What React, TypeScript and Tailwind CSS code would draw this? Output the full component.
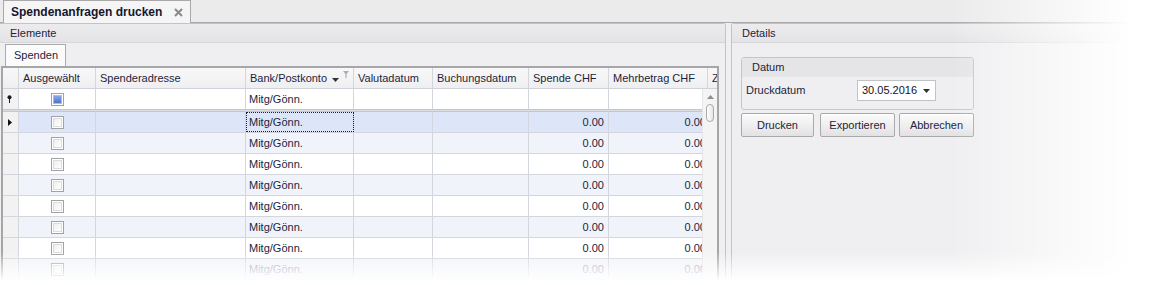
import React from "react";

const COLS = [77, 150, 108, 79, 96, 80, 99, 60];
const HEAD = ["Ausgewählt", "Spenderadresse", "Bank/Postkonto", "Valutadatum", "Buchungsdatum", "Spende CHF", "Mehrbetrag CHF", "Z"];

function Check({ blue }: { blue?: boolean }) {
  return (
    <div className="w-[13px] h-[13px] border border-[#a2a2a2] bg-white p-px">
      {blue ? (
        <div className="w-full h-full border border-[#a9bde8] bg-linear-to-b from-[#8aa6e6] to-[#4e72c6]" />
      ) : (
        <div className="w-full h-full border border-[#dcdcdc] bg-linear-to-br from-[#efefef] to-white" />
      )}
    </div>
  );
}

function Indicator({ kind, bg }: { kind?: "pin" | "arrow"; bg: string }) {
  return (
    <div className={`w-[16px] shrink-0 h-full border-r border-[#d3d6dc] flex items-center justify-center ${bg}`}>
      {kind === "pin" && (
        <svg width="5" height="8" viewBox="0 0 5 8" className="mr-[2px]">
          <circle cx="2.5" cy="2.2" r="2" fill="#1a1a1a" />
          <rect x="2" y="3.5" width="1" height="4.5" fill="#1a1a1a" />
        </svg>
      )}
      {kind === "arrow" && (
        <svg width="4" height="7" viewBox="0 0 4 7" className="mr-[1px]">
          <polygon points="0,0 4,3.5 0,7" fill="#111" />
        </svg>
      )}
    </div>
  );
}

function DataRow({ i, faded }: { i: number; faded?: boolean }) {
  const selected = i === 0;
  const bg = selected ? "bg-[#dde6f8]" : i % 2 === 1 ? "bg-[#f0f3f9]" : "bg-white";
  const txt = faded ? "text-[#9a9ab0]" : "text-[#1e1e3c]";
  return (
    <div className={`flex h-[21px] border-b border-[#d3d6dc] ${txt}`}>
      <Indicator kind={selected ? "arrow" : undefined} bg="bg-[#f2f2f3]" />
      <div className={`flex ${bg}`}>
        <div className="w-[77px] shrink-0 border-r border-[#d3d6dc] flex items-center justify-center">
          <Check />
        </div>
        <div className="w-[150px] shrink-0 border-r border-[#d3d6dc]" />
        <div
          className={`w-[108px] shrink-0 border-r border-[#d3d6dc] flex items-center pl-[3px] ${
            selected ? "outline outline-1 outline-dotted outline-[#222] -outline-offset-1" : ""
          }`}
        >
          Mitg/Gönn.
        </div>
        <div className="w-[79px] shrink-0 border-r border-[#d3d6dc]" />
        <div className="w-[96px] shrink-0 border-r border-[#d3d6dc]" />
        <div className="w-[80px] shrink-0 border-r border-[#d3d6dc] flex items-center justify-end pr-[4px]">0.00</div>
        <div className="w-[99px] shrink-0 border-r border-[#d3d6dc] flex items-center justify-end pr-[1px]">0.00</div>
        <div className="w-[60px] shrink-0" />
      </div>
    </div>
  );
}

function Btn({ label, w, ml }: { label: string; w: string; ml: string }) {
  return (
    <div
      className={`${w} ${ml} h-[24px] border border-[#a9a9a9] rounded-[2px] bg-linear-to-b from-[#fbfbfb] via-[#efeff0] to-[#e2e2e4] flex items-center justify-center text-[#1e1e3c] shadow-[inset_0_1px_0_#ffffff]`}
    >
      {label}
    </div>
  );
}

export default function App() {
  return (
    <div className="relative w-[1157px] h-[285px] overflow-hidden bg-[#efeff1] font-['Liberation_Sans',Arial,sans-serif] text-[11px] text-[#1e1e3c] leading-none">
      {/* document tab strip */}
      <div className="h-[23px] bg-[#ebebec] border-b border-[#a9a9a9] flex items-end pl-[3px]">
        <div className="relative -mb-px h-[23px] w-[188px] bg-[#f5f5f6] border border-b-0 border-[#a9a9a9] flex items-center pl-[7px] text-[12px] font-bold text-[#16162c]">
          Spendenanfragen drucken
          <svg className="absolute left-[170px] top-[7px]" width="9" height="9" viewBox="0 0 9 9">
            <path d="M1 1 L8 8 M8 1 L1 8" stroke="#8a8a8e" strokeWidth="2" />
          </svg>
        </div>
      </div>

      <div className="flex h-[262px]">
        {/* Elemente panel */}
        <div className="w-[726px] shrink-0 border-t border-r border-[#c3c3c6] rounded-tr-[3px] flex flex-col">
          <div className="h-[19px] shrink-0 bg-linear-to-b from-[#ececee] to-[#e4e4e6] border-b border-[#d6d6d9] flex items-center pl-[10px]">
            Elemente
          </div>
          <div className="pt-[1px] pl-[5px] flex h-[23px] shrink-0">
            <div className="w-[61px] h-[22px] bg-[#fbfbfb] border border-b-0 border-[#ababae] flex items-center pl-[8px] text-[#1e1e3c]">
              Spenden
            </div>
          </div>
          {/* grid */}
          <div className="ml-[1px] w-[718px] flex-1 border-x-2 border-t-2 border-[#a6a6a8] overflow-hidden bg-white">
            {/* header */}
            <div className="flex h-[21px] border-b border-[#cfd2d8] bg-linear-to-b from-[#f8f8f9] to-[#efeff1]">
              <div className="w-[16px] shrink-0 border-r border-[#d3d6dc]" />
              {HEAD.map((h, i) => (
                <div
                  key={h}
                  style={{ width: COLS[i] }}
                  className="relative shrink-0 border-r border-[#d3d6dc] flex items-center pl-[4px] text-[#1e1e3c] whitespace-nowrap overflow-hidden"
                >
                  {h}
                  {i === 2 && (
                    <>
                      <svg className="absolute left-[86px] top-[10px]" width="7" height="4" viewBox="0 0 7 4">
                        <polygon points="0,0 7,0 3.5,4" fill="#333" />
                      </svg>
                      <svg className="absolute left-[97px] top-[3px]" width="6" height="7" viewBox="0 0 6 7">
                        <path d="M0 0 H6 L3.6 3 V7 H2.4 V3 Z" fill="#a4afc2" />
                      </svg>
                    </>
                  )}
                </div>
              ))}
            </div>
            {/* body */}
            <div className="relative">
              {/* filter row */}
              <div className="flex h-[21px] border-b border-[#c4c7cd]">
                <Indicator kind="pin" bg="bg-[#f2f2f3]" />
                <div className="w-[77px] shrink-0 border-r border-[#d3d6dc] flex items-center justify-center">
                  <Check blue />
                </div>
                <div className="w-[150px] shrink-0 border-r border-[#d3d6dc]" />
                <div className="w-[108px] shrink-0 border-r border-[#d3d6dc] flex items-center pl-[3px]">Mitg/Gönn.</div>
                <div className="w-[79px] shrink-0 border-r border-[#d3d6dc]" />
                <div className="w-[96px] shrink-0 border-r border-[#d3d6dc]" />
                <div className="w-[80px] shrink-0 border-r border-[#d3d6dc]" />
                <div className="w-[99px] shrink-0 border-r border-[#d3d6dc]" />
              </div>
              <div className="h-[2px] bg-[#d9dce1] border-b border-[#c4c7cd]" />
              {[0, 1, 2, 3, 4, 5, 6, 7].map((i) => (
                <DataRow key={i} i={i} faded={i === 7} />
              ))}
              {/* scrollbar */}
              <div className="absolute right-0 top-0 bottom-0 w-[15px] bg-[#f4f4f5] border-l border-[#e6e6e8] flex flex-col items-center">
                <svg className="mt-[6px]" width="7" height="4" viewBox="0 0 7 4">
                  <polygon points="3.5,0 7,4 0,4" fill="#8d8d90" />
                </svg>
                <div className="mt-[5px] w-[8px] h-[18px] rounded-full border border-[#a9a9ac] bg-linear-to-r from-white to-[#e6e6e8]" />
              </div>
            </div>
          </div>
        </div>

        <div className="w-[5px] shrink-0" />

        {/* Details panel */}
        <div className="flex-1 border-t border-l border-[#c3c3c6] rounded-tl-[3px] flex flex-col">
          <div className="h-[19px] shrink-0 bg-linear-to-b from-[#ececee] to-[#e4e4e6] border-b border-[#d6d6d9] flex items-center pl-[10px]">
            Details
          </div>
          <div className="pl-[9px] pt-[14px]">
            <div className="w-[233px] border border-[#c6c6c9] rounded-[3px] overflow-hidden">
              <div className="h-[19px] bg-[#e5e5e7] flex items-center pl-[10px]">Datum</div>
              <div className="h-[32px] flex items-start pt-[3px]">
                <div className="w-[115px] pl-[4px] h-[21px] flex items-center">Druckdatum</div>
                <div className="relative w-[79px] h-[21px] bg-white border border-[#c2c2c5] flex items-center pl-[4px] text-[#111122]">
                  30.05.2016
                  <svg className="absolute right-[5px] top-[8px]" width="7" height="4" viewBox="0 0 7 4">
                    <polygon points="0,0 7,0 3.5,4" fill="#333" />
                  </svg>
                </div>
              </div>
            </div>
            <div className="flex mt-[3px]">
              <Btn label="Drucken" w="w-[73px]" ml="ml-0" />
              <Btn label="Exportieren" w="w-[75px]" ml="ml-[6px]" />
              <Btn label="Abbrechen" w="w-[75px]" ml="ml-[4px]" />
            </div>
          </div>
        </div>
      </div>

      {/* screenshot fade overlays */}
      <div className="absolute top-0 bottom-0 left-[950px] right-0 bg-linear-to-r from-transparent to-white to-[88%] pointer-events-none" />
      <div className="absolute left-0 right-0 top-[252px] bottom-0 bg-linear-to-b from-transparent to-white to-[88%] pointer-events-none" />
    </div>
  );
}
